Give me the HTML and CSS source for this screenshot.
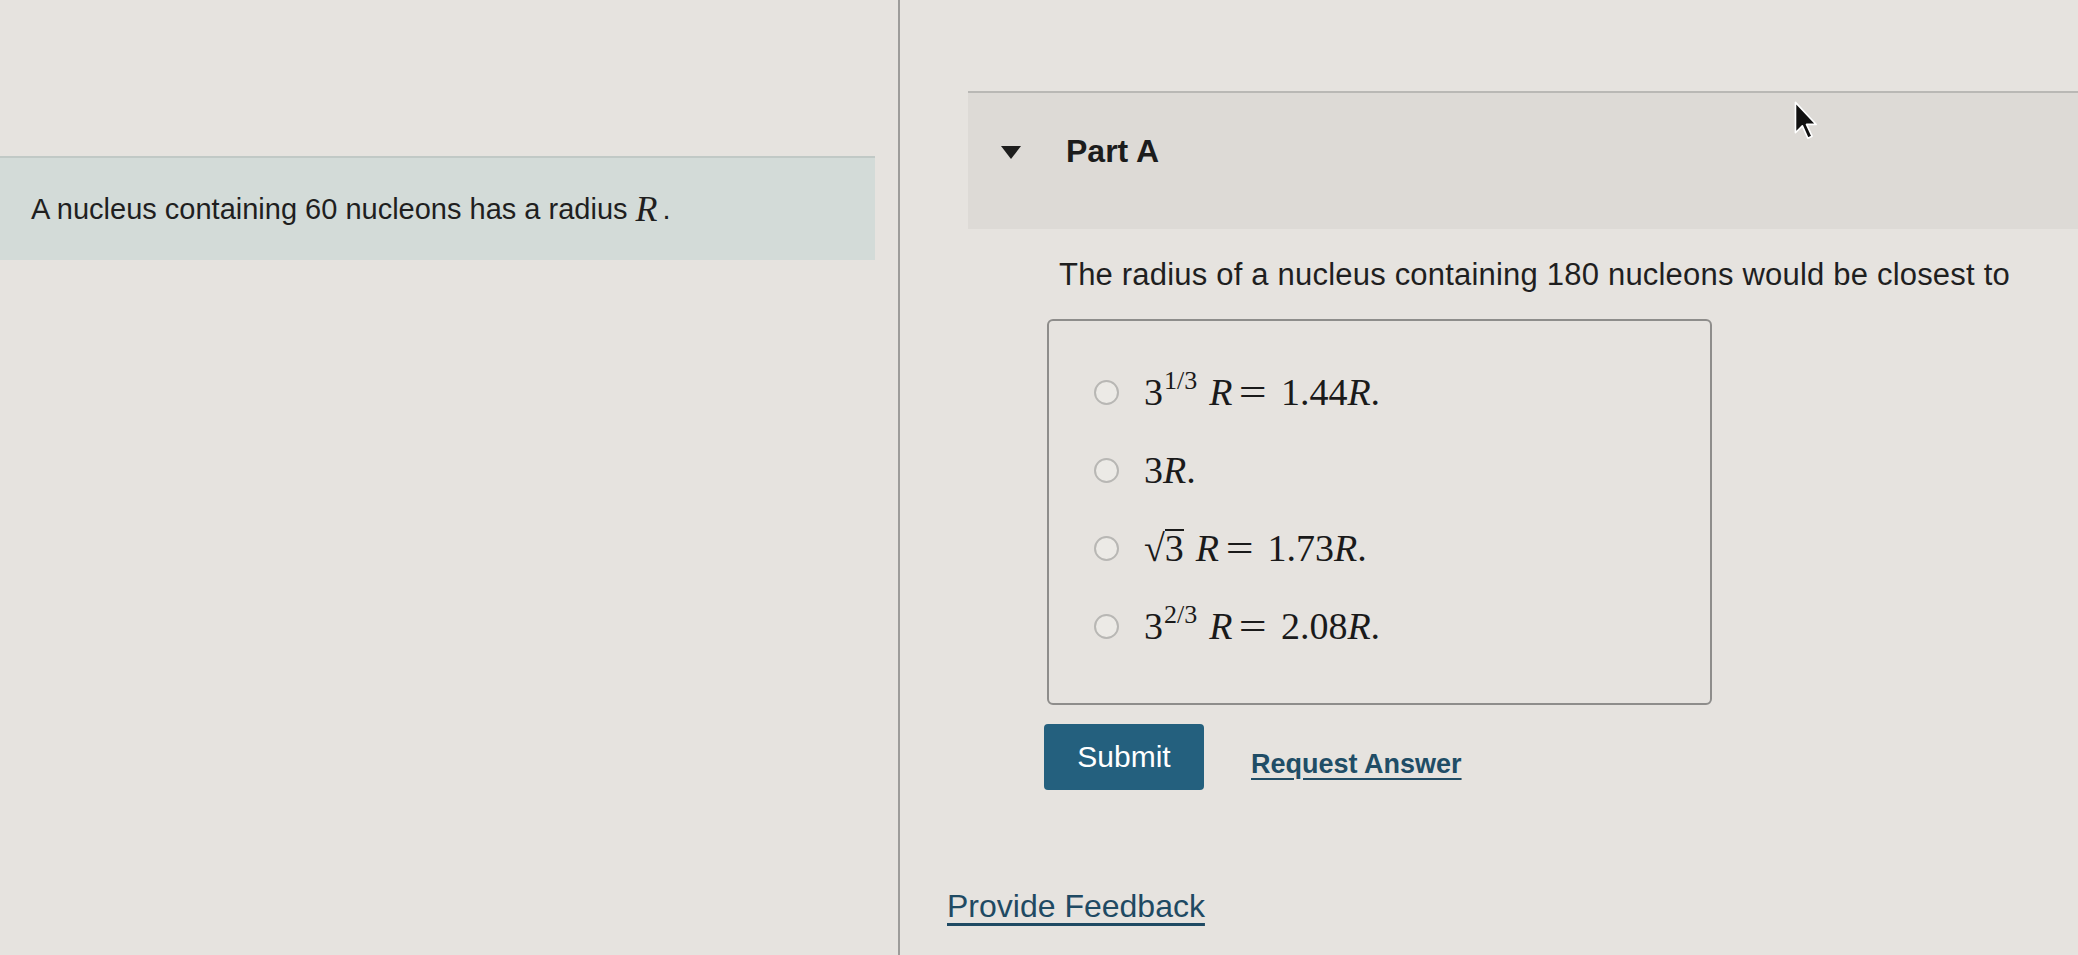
FILE: index.html
```html
<!DOCTYPE html>
<html lang="en">
<head>
    <meta charset="UTF-8">
    <title>Part A</title>
    <link rel="stylesheet" href="styles.css">
</head>
<body>

<div class="page">
    <div class="left-col">
        <div class="intro">A nucleus containing 60 nucleons has a radius <i class="math-r">R</i> .</div>
    </div>

    <div class="right-col">
        <div class="part-head">
            <span class="caret"></span>
            <h2>Part A</h2>
            <svg class="cursor" width="25" height="40" viewBox="0 0 18 29">
                <path d="M1 1 L1 23 L6 18 L10 27 L13 25.5 L9 17 L16 17 Z" fill="#111" stroke="#fff" stroke-width="1.2" stroke-linejoin="round"/>
            </svg>
        </div>

        <div class="part-body">
            <p class="question">The radius of a nucleus containing 180 nucleons would be closest to</p>

            <div class="choices">
                <label class="choice">
                    <span class="radio"></span>
                    <span class="math">3<sup>1/3</sup><i class="var">R</i><span class="eq">=</span>1.44<i>R</i>.</span>
                </label>
                <label class="choice">
                    <span class="radio"></span>
                    <span class="math">3<i>R</i>.</span>
                </label>
                <label class="choice">
                    <span class="radio"></span>
                    <span class="math"><span class="sqrt">&radic;<span class="radicand">3</span></span><i class="var">R</i><span class="eq">=</span>1.73<i>R</i>.</span>
                </label>
                <label class="choice">
                    <span class="radio"></span>
                    <span class="math">3<sup>2/3</sup><i class="var">R</i><span class="eq">=</span>2.08<i>R</i>.</span>
                </label>
            </div>

            <div class="actions">
                <button class="submit">Submit</button>
                <a class="request" href="#">Request Answer</a>
            </div>
        </div>

        <a class="feedback" href="#">Provide Feedback</a>
    </div>
</div>

</body>
</html>
```

FILE: styles.css
```css
body {
    margin: 0;
    font-family: "Liberation Sans", Arial, sans-serif;
    background-color: #e6e3df; /* screen grey */
    color: #1f1f1f;
}
.page {
    display: flex;
    height: 955px;
    overflow: hidden;
}

/* left column with the problem intro */
.left-col {
    width: 900px;
    flex-shrink: 0;
    border-right: 2px solid #9d9c9a;
    padding-top: 156px;
    box-sizing: border-box;
}
.intro {
    width: 875px;
    height: 104px;
    box-sizing: border-box;
    padding-left: 31px;
    display: flex;
    align-items: center;
    background-color: #d3dbd8; /* pale green-grey */
    border-top: 2px solid #c1c9c6;
    font-size: 29px;
}
.math-r {
    font-family: "Liberation Serif", serif;
    font-size: 36px;
    margin-left: 8px;
    margin-right: 5px;
}

/* right column */
.right-col {
    flex: 1;
    padding-top: 91px;
}
.part-head {
    position: relative;
    margin-left: 68px;
    height: 138px;
    box-sizing: border-box;
    padding: 41px 0 0 33px;
    display: flex;
    align-items: flex-start;
    background-color: #dddad6;
    border-top: 2px solid #b9b8b5;
}
.caret {
    width: 0;
    height: 0;
    margin-top: 12px;
    border-left: 10px solid transparent;
    border-right: 10px solid transparent;
    border-top: 13px solid #1d1d1d;
}
.part-head h2 {
    margin: 0 0 0 45px;
    font-size: 32px;
    line-height: 34px;
    font-weight: bold;
    color: #1c1c1c;
}
.cursor {
    position: absolute;
    left: 826px;
    top: 8px;
}

.part-body {
    padding-left: 147px;
}
.question {
    margin: 29px 0 27px 12px;
    font-size: 31px;
    line-height: 34px;
    letter-spacing: 0.2px;
}
.choices {
    width: 665px;
    box-sizing: border-box;
    border: 2px solid #8e8d8b;
    border-radius: 6px;
    padding: 32px 0 38px 45px;
}
.choice {
    display: flex;
    align-items: center;
    height: 78px;
}
.radio {
    width: 21px;
    height: 21px;
    border: 2px solid #b8b7b4;
    border-radius: 50%;
    background-color: #eceae6;
    margin-right: 25px;
    flex-shrink: 0;
}
.math {
    font-family: "Liberation Serif", "Times New Roman", serif;
    font-size: 38px;
    color: #1a1a1a;
}
.math sup {
    font-size: 26px;
    vertical-align: 16px;
    line-height: 0;
    margin-left: 1px;
}
.math .var {
    margin-left: 12px;
}
.eq {
    display: inline-block;
    margin: 0 17px 0 10px;
    transform: scaleX(1.3);
}
.radicand {
    display: inline-block;
    border-top: 2px solid #1a1a1a;
    line-height: 32px;
    padding-top: 1px;
}

.actions {
    display: flex;
    align-items: center;
    margin-top: 19px;
}
.submit {
    width: 160px;
    height: 66px;
    margin-left: -3px;
    background-color: #24607e;
    color: #ffffff;
    border: none;
    border-radius: 4px;
    font-family: "Liberation Sans", Arial, sans-serif;
    font-size: 30px;
    cursor: pointer;
}
.request {
    margin: 14px 0 0 47px;
    font-size: 27px;
    font-weight: bold;
    color: #204d66;
    text-decoration: underline;
    text-underline-offset: 5px;
}
.feedback {
    display: inline-block;
    margin: 98px 0 0 47px;
    font-size: 32px;
    line-height: 36px;
    color: #1f4a63;
    text-decoration: underline;
    text-underline-offset: 6px;
}
```
